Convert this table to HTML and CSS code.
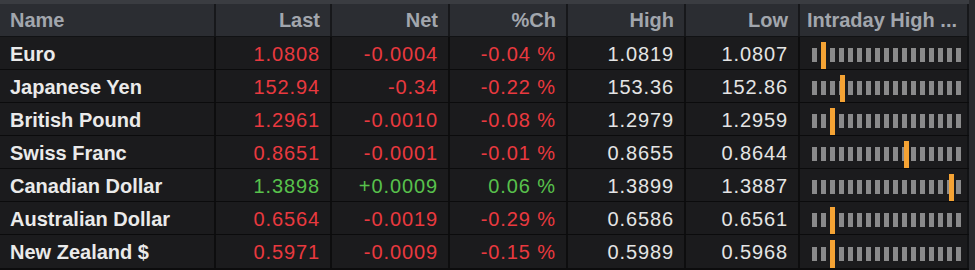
FILE: index.html
```html
<!DOCTYPE html>
<html>
<head>
<meta charset="utf-8">
<link rel="stylesheet" href="styles.css">
</head>
<body>
<div class="table">
  <div class="row head">
    <div class="c name">Name</div>
    <div class="c num">Last</div>
    <div class="c num">Net</div>
    <div class="c num">%Ch</div>
    <div class="c num">High</div>
    <div class="c num">Low</div>
    <div class="c intra">Intraday High ...</div>
  </div>
  <div class="row">
    <div class="c name">Euro</div>
    <div class="c num red">1.0808</div>
    <div class="c num red">-0.0004</div>
    <div class="c num red">-0.04 %</div>
    <div class="c num">1.0819</div>
    <div class="c num">1.0807</div>
    <div class="c bars"><div class="track"><i></i><i></i><i></i><i></i><i></i><i></i><i></i><i></i><i></i><i></i><i></i><i></i><i></i><i></i><i></i><i></i><i></i><b class="mark" style="left:9px"></b></div></div>
  </div>
  <div class="row">
    <div class="c name">Japanese Yen</div>
    <div class="c num red">152.94</div>
    <div class="c num red">-0.34</div>
    <div class="c num red">-0.22 %</div>
    <div class="c num">153.36</div>
    <div class="c num">152.86</div>
    <div class="c bars"><div class="track"><i></i><i></i><i></i><i></i><i></i><i></i><i></i><i></i><i></i><i></i><i></i><i></i><i></i><i></i><i></i><i></i><i></i><b class="mark" style="left:28px"></b></div></div>
  </div>
  <div class="row">
    <div class="c name">British Pound</div>
    <div class="c num red">1.2961</div>
    <div class="c num red">-0.0010</div>
    <div class="c num red">-0.08 %</div>
    <div class="c num">1.2979</div>
    <div class="c num">1.2959</div>
    <div class="c bars"><div class="track"><i></i><i></i><i></i><i></i><i></i><i></i><i></i><i></i><i></i><i></i><i></i><i></i><i></i><i></i><i></i><i></i><i></i><b class="mark" style="left:18px"></b></div></div>
  </div>
  <div class="row">
    <div class="c name">Swiss Franc</div>
    <div class="c num red">0.8651</div>
    <div class="c num red">-0.0001</div>
    <div class="c num red">-0.01 %</div>
    <div class="c num">0.8655</div>
    <div class="c num">0.8644</div>
    <div class="c bars"><div class="track"><i></i><i></i><i></i><i></i><i></i><i></i><i></i><i></i><i></i><i></i><i></i><i></i><i></i><i></i><i></i><i></i><i></i><b class="mark" style="left:92px"></b></div></div>
  </div>
  <div class="row">
    <div class="c name">Canadian Dollar</div>
    <div class="c num green">1.3898</div>
    <div class="c num green">+0.0009</div>
    <div class="c num green">0.06 %</div>
    <div class="c num">1.3899</div>
    <div class="c num">1.3887</div>
    <div class="c bars"><div class="track"><i></i><i></i><i></i><i></i><i></i><i></i><i></i><i></i><i></i><i></i><i></i><i></i><i></i><i></i><i></i><i></i><i></i><b class="mark" style="left:137px"></b></div></div>
  </div>
  <div class="row">
    <div class="c name">Australian Dollar</div>
    <div class="c num red">0.6564</div>
    <div class="c num red">-0.0019</div>
    <div class="c num red">-0.29 %</div>
    <div class="c num">0.6586</div>
    <div class="c num">0.6561</div>
    <div class="c bars"><div class="track"><i></i><i></i><i></i><i></i><i></i><i></i><i></i><i></i><i></i><i></i><i></i><i></i><i></i><i></i><i></i><i></i><i></i><b class="mark" style="left:18px"></b></div></div>
  </div>
  <div class="row">
    <div class="c name">New Zealand $</div>
    <div class="c num red">0.5971</div>
    <div class="c num red">-0.0009</div>
    <div class="c num red">-0.15 %</div>
    <div class="c num">0.5989</div>
    <div class="c num">0.5968</div>
    <div class="c bars"><div class="track"><i></i><i></i><i></i><i></i><i></i><i></i><i></i><i></i><i></i><i></i><i></i><i></i><i></i><i></i><i></i><i></i><i></i><b class="mark" style="left:18px"></b></div></div>
  </div>
</div>
</body>
</html>
```
FILE: styles.css
```css
html, body {
  margin: 0;
  padding: 0;
  background: #2a2b2f;
}
body {
  width: 975px;
  height: 270px;
  overflow: hidden;
  font-family: "Liberation Sans", Arial, sans-serif;
}
.table {
  width: 969px;
  background: #1b1b1d;
  border-top: 4px solid #3a3c41;
  border-bottom: 2px solid #0c0c0d;
}
.row {
  display: grid;
  grid-template-columns: 216px 116px 118px 118px 118px 114px 1fr;
  height: 33px;
  border-bottom: 1px solid #0b0b0c;
  box-sizing: border-box;
}
.row:last-child {
  border-bottom: none;
}
.row.head {
  height: 33px;
  background: #2b2d32;
  border-bottom: 1px solid #111214;
}
.c {
  display: flex;
  align-items: center;
  padding: 2px 10px 0 10px;
  border-right: 2px solid #0d0d0e;
  font-size: 20px;
  color: #e4e4e4;
  white-space: nowrap;
  overflow: hidden;
}
.c:last-child {
  border-right: 2px solid #111214;
}
.head .c {
  border-right-color: #17181b;
  color: #a2a6ad;
  font-weight: bold;
  padding-top: 0;
}
.name {
  font-weight: bold;
  color: #eaeaea;
}
.num {
  justify-content: flex-end;
  letter-spacing: 0.9px;
}
.head .num {
  letter-spacing: 0;
}
.intra {
  padding-left: 7px;
}
.red { color: #e9393f; }
.green { color: #58c14c; }
.bars {
  padding: 0 0 0 12px;
  align-items: stretch;
}
.track {
  position: relative;
  display: flex;
  align-items: center;
  gap: 4px;
  padding-top: 4px;
}
.track i {
  display: block;
  width: 5px;
  height: 14px;
  background: #8a8a8b;
}
.mark {
  position: absolute;
  top: 5px;
  bottom: 0;
  width: 5px;
  background: #f5a334;
}
```
